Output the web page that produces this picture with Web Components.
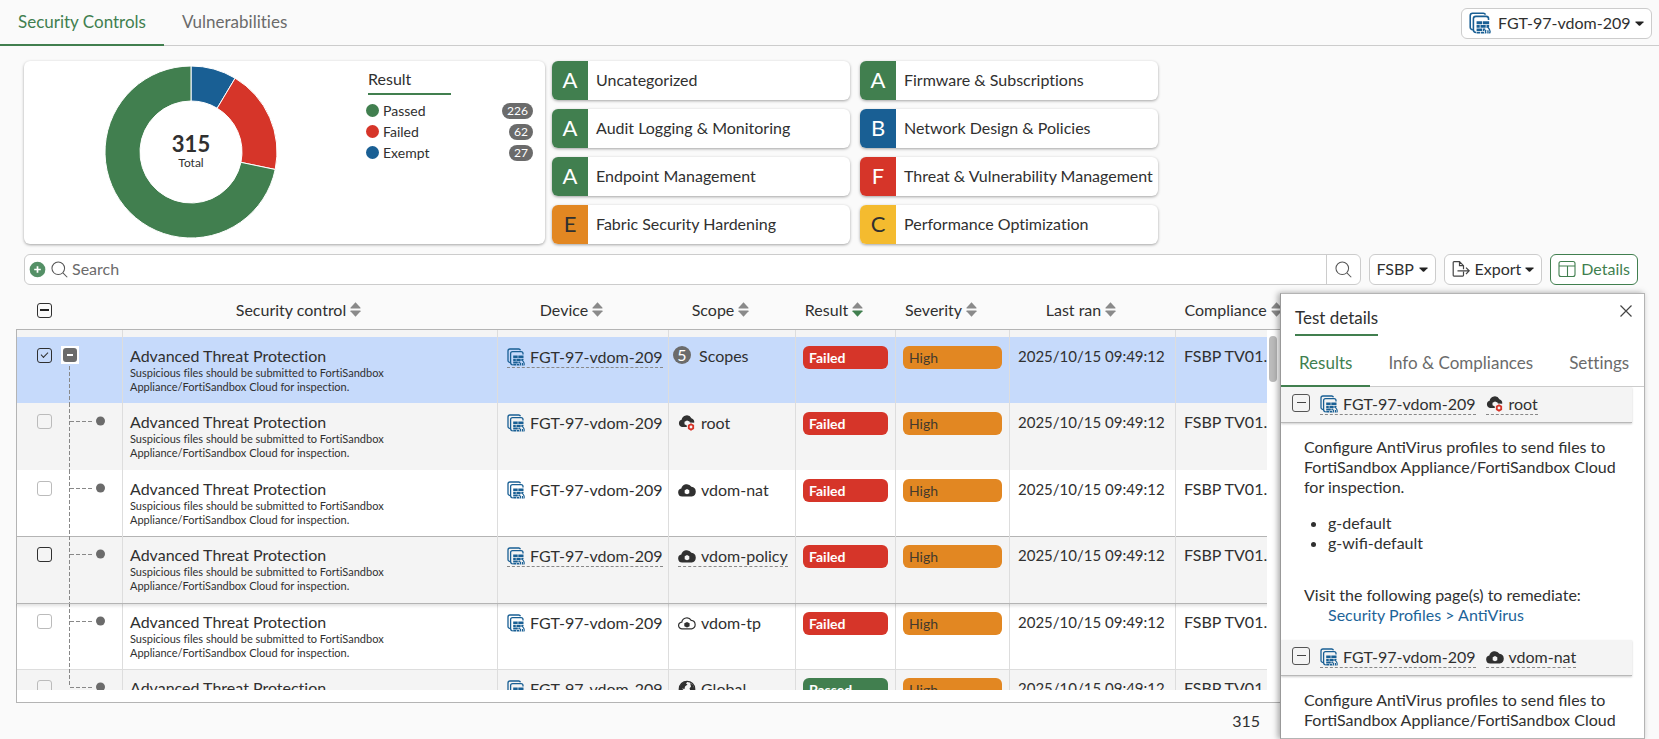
<!DOCTYPE html>
<html lang="en">
<head>
<meta charset="utf-8">
<title>Security Rating</title>
<meta name="viewport" content="width=device-width, initial-scale=1">
<style>
  :root {
    --green: #417f4f;
    --red: #d63529;
    --blue: #195f94;
    --orange: #e28722;
    --yellow: #f4bb2f;
    --grey: #6b6b6b;
    --line: #ccc;
    --text: #303030;
  }
  html, body {
    height: 100%;
    margin: 0;
  }
  body {
    background: #fafafa;
    color: var(--text);
    font: 16px/20px Lato, "Liberation Sans", sans-serif;
    font-variant-ligatures: none;
    overflow: hidden;
  }
</style>
</head>
<body>
<rating-page></rating-page>

<script>
const ICONS = {
  device: `<svg viewBox="0 0 18 18" fill="none">
    <path d="M3.200 14.500H3A2 2 0 0 1 1 12.500V3A2 2 0 0 1 3 1h8.500A2 2 0 0 1 13.500 2.200" stroke="#195f94" stroke-width="1.300"/>
    <path d="M5.800 16.800a2.200 2.200 0 0 1-2.200-2.200V5.600a2 2 0 0 1 2-2H14a2 2 0 0 1 2 2v1" stroke="#195f94" stroke-width="1.300"/>
    <path d="M6.200 7.600h4.500v2.500H6.200zM11.300 7.600h5.200v2.500h-5.200zM6.200 10.700h2.600v2.200H6.200zM9.400 10.700h4.300v2.200H9.400zM14.300 10.700h2.200v1.300l-2.200 1zM6.200 13.500h4.600v2.100H6.200zM11.400 13.500h2l-.9 2.100h-1.100zM6.200 16.100h2.900v1.500H6.200zM9.700 16.100h2.500l.5 1.500h-3z" fill="#195f94"/>
    <path d="M15.200 12.200c1 1.300 2.400 2.400 2 4.300l-.5 1M13.800 14.600c-.4 1-.6 1.900.2 2.900M15.500 15v2.500" stroke="#195f94" stroke-width="1.100"/>
  </svg>`,
  cloud: `<svg viewBox="0 0 18 18"><path fill="#303030" fill-rule="evenodd" d="M4.200 15.500A4 4 0 0 1 3.300 7.600 5.500 5.500 0 0 1 13.400 5.800 4.900 4.900 0 0 1 13.700 15.500zM6.700 9.200v3L9 13.300l2.300-1.100v-3L9 8.100z"/></svg>`,
  cloudOutline: `<svg viewBox="0 0 18 18" fill="none"><path stroke="#303030" stroke-width="1.200" d="M4.200 14.900A3.400 3.400 0 0 1 3.800 8.100 5.100 5.100 0 0 1 13.200 6.400 4.300 4.300 0 0 1 13.700 14.900z"/><path fill="#303030" d="M6.300 9.200 9 8l2.600 1.200v3L9 13.400l-2.700-1.200z"/></svg>`,
  cloudRoot: `<svg viewBox="0 0 18 18"><path fill="#303030" fill-rule="evenodd" d="M4 13A3.700 3.700 0 0 1 3.600 5.800 5.200 5.200 0 0 1 13.400 4.200 4.200 4.200 0 0 1 16.200 8.800l-4.400-.2-.3-1L9 6.500 6.500 7.700V10.300l2.300 1.200V13z"/>
    <circle cx="13" cy="13" r="2.300" fill="none" stroke="#d63529" stroke-width="1.700"/>
    <path stroke="#d63529" stroke-width="1.500" d="M13 9.500v1.500M13 15v1.500M10 11.300l1.300.7M14.700 14l1.300.7M10 14.700l1.300-.7M14.700 12l1.300-.7"/></svg>`,
  globe: `<svg viewBox="0 0 18 18"><circle cx="9" cy="9" r="7.700" fill="none" stroke="#303030" stroke-width="1.300"/><path fill="#303030" d="M2 6.500C3.500 3 6 1.500 9.500 1.600L8 3.500l1.500 1L7 6.500 6.500 9 4 8.500l3 3-1.500 3.500C2.500 13 1.500 10 2 6.500zM12 3l3 2 1.500 4-1.500 3.500L12.500 11l-1-2.500 1.500-2z"/></svg>`,
  search: `<svg viewBox="0 0 18 18" fill="none" stroke="#555" stroke-width="1.100"><circle cx="7.700" cy="7.700" r="6.700"/><path d="m12.600 12.600 4.600 4.600"/></svg>`,
  add: `<svg viewBox="0 0 18 18"><circle cx="9" cy="9" r="8.300" fill="#549066"/><path d="M9 5.500v7M5.500 9h7" stroke="#fff" stroke-width="1.800"/></svg>`,
  export: `<svg viewBox="0 0 18 18" fill="none" stroke="#444" stroke-width="1.200"><path d="M11.500 11.800v3.500a.8.800 0 0 1-.8.800H2a.8.800 0 0 1-.8-.8V2.500a.8.800 0 0 1 .8-.8h5.500l4 4v3.500M7.500 1.700v4h4M5.500 10.800h11.500M14 7.600l3.200 3.200L14 14"/></svg>`,
  columns: `<svg viewBox="0 0 18 18" fill="none" stroke="#417f4f" stroke-width="1.100"><rect x="1" y="1.500" width="16" height="15" rx="2"/><path d="M1 6h16M9.500 6V16.500"/></svg>`,
  close: `<svg viewBox="0 0 18 18" fill="none" stroke="#444" stroke-width="1.200"><path d="m3.500 3.500 11 11M14.500 3.500l-11 11"/></svg>`,
  caret: `<svg viewBox="0 0 18 18"><path fill="#222" d="M1.500 5h15q1.500 0 .5 1.500l-6.500 6.500q-1.500 1.200-3 0L1 6.500Q0 5 1.500 5z"/></svg>`,
  sort: `<svg viewBox="0 0 12 16"><path fill="#8a8a8a" d="m6 0 5.500 6q.3.800-.5 1H1Q.2 6.800.5 6z"/><path class="down" d="m6 16 5.500-6q.3-.8-.5-1H1Q.2 9.200.5 10z"/></svg>`
};

class UiIcon extends HTMLElement {
  constructor() {
    super();
    this.attachShadow({mode: 'open'});
  }

  connectedCallback() {
    this.shadowRoot.innerHTML = `
      <style>
        :host {
          display: inline-block;
          flex: none;
          width: var(--icon-width, 18px);
          height: var(--icon-height, 18px);
        }
        svg {
          display: block;
          width: 100%;
          height: 100%;
        }
        .down {
          fill: var(--sort-down, #8a8a8a);
        }
      </style>
      ${ICONS[this.getAttribute('name')]}
    `;
  }
}

class TabBar extends HTMLElement {
  constructor() {
    super();
    this.attachShadow({mode: 'open'});
  }

  connectedCallback() {
    const tabs = this.getAttribute('tabs').split('|');

    this.shadowRoot.innerHTML = `
      <style>
        :host {
          display: flex;
          align-items: flex-end;
          border-bottom: 1px solid var(--line);
        }
        button {
          border: 0;
          border-bottom: 2px solid transparent;
          margin: 0 0 -1px;
          padding: 0 18px 12px;
          background: none;
          color: var(--grey);
          font: 17px/20px Lato, sans-serif;
          font-variant-ligatures: none;
          white-space: nowrap;
        }
        button[aria-selected=true] {
          color: var(--green);
          border-bottom-color: var(--green);
        }
        [role=tablist] {
          display: flex;
        }
      </style>
      <div role="tablist">
        ${tabs.map((tab, i) => `<button role="tab" aria-selected="${i === 0}">${tab}</button>`).join('')}
      </div>
      <slot></slot>
    `;
  }
}

class SelectBox extends HTMLElement {
  constructor() {
    super();
    this.attachShadow({mode: 'open'});
  }

  connectedCallback() {
    this.shadowRoot.innerHTML = `
      <style>
        :host {
          display: flex;
          align-items: center;
          box-sizing: border-box;
          height: 31px;
          padding: 0 7px 1px;
          background: #fff;
          border: 1px solid var(--line);
          border-radius: 6px;
        }
        select {
          appearance: none;
          border: 0;
          margin: 0;
          padding: 0;
          background: none;
          color: inherit;
          font: inherit;
        }
        ui-icon {
          --icon-width: 9px;
          --icon-height: 9px;
          margin-left: 4px;
        }
      </style>
      <slot></slot>
      <select aria-label="${this.getAttribute('label')}"><option>${this.getAttribute('value')}</option></select>
      <ui-icon name="caret"></ui-icon>
    `;
  }
}

class ResultDonut extends HTMLElement {
  constructor() {
    super();
    this.attachShadow({mode: 'open'});
    this.results = [
      {label: 'Passed', count: 226, color: 'var(--green)'},
      {label: 'Failed', count: 62, color: 'var(--red)'},
      {label: 'Exempt', count: 27, color: 'var(--blue)'}
    ];
  }

  connectedCallback() {
    const total = this.results.reduce((sum, r) => sum + r.count, 0);

    this.shadowRoot.innerHTML = `
      <style>
        :host {
          display: flex;
          box-sizing: border-box;
          flex: 0 1 521px;
          padding: 5px 12px 5px 0;
          background: #fff;
          border-radius: 6px;
          box-shadow: 0 1px 3px rgba(0, 0, 0, .35);
        }
        .chart {
          flex: 1;
          display: flex;
          justify-content: center;
          padding-right: 8px;
        }
        svg {
          display: block;
          width: 172px;
          height: 172px;
        }
        text {
          text-anchor: middle;
          fill: var(--text);
        }
        .total {
          font-size: 22px;
          font-weight: 700;
        }
        .caption {
          font-size: 12px;
        }
        .legend {
          flex: 0 0 167px;
          padding-top: 3px;
        }
        h2 {
          width: 83px;
          margin: 0 0 5px 2px;
          padding-bottom: 4px;
          border-bottom: 2px solid var(--green);
          font-size: 16px;
          line-height: 20px;
          font-weight: 400;
        }
        ul {
          margin: 0;
          padding: 0;
          list-style: none;
        }
        li {
          display: flex;
          align-items: center;
          gap: 4px;
          height: 21px;
          font-size: 14px;
        }
        .dot {
          width: 13px;
          height: 13px;
          border-radius: 50%;
        }
        .count {
          margin-left: auto;
          padding: 0 5px;
          border-radius: 8px;
          background: var(--grey);
          color: #fff;
          font-size: 12px;
          line-height: 16px;
        }
      </style>
      <div class="chart">
        <svg viewBox="0 0 172 172" role="img" aria-label="${total} total">
          ${this.slices(total)}
          <text class="total" x="86" y="86">${total}</text>
          <text class="caption" x="86" y="101">Total</text>
        </svg>
      </div>
      <div class="legend">
        <h2>Result</h2>
        <ul>
          ${this.results.map(r => `
            <li><span class="dot" style="background: ${r.color}"></span>${r.label}<span class="count">${r.count}</span></li>
          `).join('')}
        </ul>
      </div>
    `;
  }

  // slices run clockwise from the top, last result first
  slices(total) {
    const point = (angle, r) => `${(86 + r * Math.sin(angle)).toFixed(2)} ${(86 - r * Math.cos(angle)).toFixed(2)}`;
    let start = 0;

    return [...this.results].reverse().map(({count, color}) => {
      const end = start + count / total * Math.PI * 2;
      const large = end - start > Math.PI ? 1 : 0;
      const d = `M${point(start, 86)}A86 86 0 ${large} 1 ${point(end, 86)}L${point(end, 51)}A51 51 0 ${large} 0 ${point(start, 51)}Z`;
      start = end;
      return `<path d="${d}" fill="${color}" stroke="#fff"/>`;
    }).join('');
  }
}

class GradeTile extends HTMLElement {
  constructor() {
    super();
    this.attachShadow({mode: 'open'});
  }

  connectedCallback() {
    const grade = this.getAttribute('grade');
    const colors = {
      A: ['var(--green)', '#fff'],
      B: ['var(--blue)', '#fff'],
      C: ['var(--yellow)', '#303030'],
      E: ['var(--orange)', '#303030'],
      F: ['var(--red)', '#fff']
    };
    const [back, fore] = colors[grade];

    this.shadowRoot.innerHTML = `
      <style>
        :host {
          display: flex;
          height: 39px;
          overflow: hidden;
          background: #fff;
          border-radius: 6px;
          box-shadow: 0 1px 3px rgba(0, 0, 0, .35);
          line-height: 38px;
          white-space: nowrap;
        }
        .grade {
          width: 36px;
          margin-right: 8px;
          background: ${back};
          color: ${fore};
          font-size: 22px;
          text-align: center;
        }
      </style>
      <span class="grade">${grade}</span>
      <slot></slot>
    `;
  }
}

class SearchBar extends HTMLElement {
  constructor() {
    super();
    this.attachShadow({mode: 'open'});
    this.shadowRoot.innerHTML = `
      <style>
        :host {
          display: flex;
          align-items: center;
          flex: 1;
          box-sizing: border-box;
          height: 31px;
          padding-left: 4px;
          background: #fff;
          border: 1px solid var(--line);
          border-radius: 6px;
        }
        button {
          display: flex;
          border: 0;
          padding: 0;
          background: none;
        }
        input {
          flex: 1;
          border: 0;
          padding: 0 4px 2px;
          background: none;
          font: inherit;
        }
        input::placeholder {
          color: var(--grey);
        }
        ui-icon {
          --icon-width: 17px;
          --icon-height: 17px;
        }
        .add {
          margin-right: 5px;
        }
        .go {
          height: 100%;
          align-items: center;
          padding: 0 8px;
          border-left: 1px solid var(--line);
        }
      </style>
      <button class="add" aria-label="Add filter"><ui-icon name="add"></ui-icon></button>
      <ui-icon name="search"></ui-icon>
      <input type="text" placeholder="Search" aria-label="Search">
      <button class="go" aria-label="Search"><ui-icon name="search"></ui-icon></button>
    `;
  }
}

// icon and name of a device or scope; "underline" draws it as a tooltip target
class ObjectLabel extends HTMLElement {
  constructor() {
    super();
    this.attachShadow({mode: 'open'});
  }

  connectedCallback() {
    this.shadowRoot.innerHTML = `
      <style>
        :host {
          display: inline-flex;
          align-items: center;
          gap: 5px;
          white-space: nowrap;
          border-bottom: 1px dashed transparent;
        }
        :host([underline]) {
          border-bottom-color: #888;
        }
      </style>
      <ui-icon name="${this.getAttribute('icon')}"></ui-icon>
      <slot></slot>
    `;
  }
}

class StatusPill extends HTMLElement {
  constructor() {
    super();
    this.attachShadow({mode: 'open'});
    this.shadowRoot.innerHTML = `
      <style>
        :host {
          display: block;
          padding: 0 6px;
          border-radius: 6px;
          color: #fff;
          font-size: 14px;
          line-height: 23px;
          font-weight: 700;
          background: var(--red);
        }
        :host([kind=passed]) {
          background: var(--green);
        }
        :host([kind=high]) {
          background: var(--orange);
          color: #443a2d;
          font-weight: 400;
        }
      </style>
      <slot></slot>
    `;
  }
}

class ControlsTable extends HTMLElement {
  constructor() {
    super();
    this.attachShadow({mode: 'open'});
    this.columns = ['Security control', 'Device', 'Scope', 'Result', 'Severity', 'Last ran', 'Compliance'];
    this.rows = [
      {scopes: 5, result: 'Failed', state: 'selected'},
      {scope: 'root', icon: 'cloudRoot', result: 'Failed'},
      {scope: 'vdom-nat', icon: 'cloud', result: 'Failed'},
      {scope: 'vdom-policy', icon: 'cloud', result: 'Failed', state: 'hovered'},
      {scope: 'vdom-tp', icon: 'cloudOutline', result: 'Failed'},
      {scope: 'Global', icon: 'globe', result: 'Passed', state: 'last'}
    ];
  }

  connectedCallback() {
    this.shadowRoot.innerHTML = `
      <style>
        :host {
          display: flex;
          flex-direction: column;
          flex: 1;
          min-width: 0;
        }
        .pane {
          flex: 1;
          min-height: 0;
          position: relative;
          overflow: hidden;
        }
        table {
          width: calc(100% + 33px);
          table-layout: fixed;
          border-collapse: separate;
          border-spacing: 0;
        }
        th {
          box-sizing: border-box;
          height: 45px;
          padding: 6px 22px 0 0;
          border-bottom: 1px solid #b4b4b4;
          font-weight: 400;
        }
        th:first-child {
          text-align: left;
          padding-left: 21px;
        }
        th button {
          display: inline-flex;
          align-items: center;
          gap: 4px;
          border: 0;
          padding: 0;
          background: none;
          color: inherit;
          font: inherit;
          font-variant-ligatures: none;
        }
        th ui-icon {
          --icon-width: 11px;
          --icon-height: 15px;
          margin-bottom: 2px;
        }
        th.sorted ui-icon {
          --sort-down: var(--green);
        }
        td {
          height: 66px;
          padding: 9px 7px 0;
          box-sizing: border-box;
          border-left: 1px solid #ddd;
          vertical-align: top;
          white-space: nowrap;
        }
        td:first-child {
          padding: 0 0 0 20px;
          border-left-color: #b4b4b4;
        }
        td:nth-child(3), td:nth-child(4) {
          padding: 10px 0 0 9px;
        }
        td:nth-child(7), td:nth-child(8) {
          padding-left: 8px;
        }
        td:nth-child(7) {
          font-size: 15px;
        }
        tbody tr {
          background: #fff;
        }
        tbody tr:nth-child(odd) {
          background: #f4f4f4;
        }
        tbody tr:nth-child(odd) td {
          height: 67px;
        }
        tbody tr.selected {
          background: #c6dafb;
        }
        tbody tr.cut td {
          height: 7px;
          padding: 0;
        }
        tr.hovered {
          position: relative;
          box-shadow: 0 1px 0 #b4b4b4, 0 3px 3px rgba(0, 0, 0, .12), inset 0 1px 0 #b4b4b4;
        }
        tr.last {
          box-shadow: inset 0 1px 0 #ddd;
        }
        input {
          appearance: none;
          display: grid;
          place-items: center;
          width: 15px;
          height: 15px;
          margin: 0;
          border: 1px solid #bbb;
          border-radius: 3px;
        }
        input.dark {
          border-color: #303030;
        }
        input:indeterminate::before {
          content: "";
          width: 9px;
          height: 2px;
          background: #222;
        }
        input:checked::before {
          content: "";
          width: 6px;
          height: 3px;
          margin-bottom: 3px;
          border: solid #303030;
          border-width: 0 0 1px 1px;
          transform: rotate(-45deg);
        }
        .lead {
          display: flex;
          gap: 9px;
        }
        .lead input {
          margin-top: 11px;
        }
        .tree {
          display: grid;
          justify-items: start;
        }
        .tree > * {
          grid-area: 1 / 1;
        }
        .tree svg {
          display: block;
          overflow: visible;
        }
        .toggle {
          width: 18px;
          height: 18px;
          margin-top: 9px;
          border: 2px solid #fff;
          padding: 0;
          background: #fff;
        }
        .toggle::before {
          content: "";
          display: block;
          width: 6px;
          height: 2px;
          border: solid var(--grey);
          border-width: 6px 4px;
          border-radius: 3px;
          background: #fff;
        }
        strong {
          display: block;
          font-weight: 400;
        }
        small {
          display: block;
          font-size: 11px;
          line-height: 14px;
        }
        .scopes {
          display: flex;
          gap: 8px;
          margin: -1px 0 0 -5px;
        }
        .scopes b {
          width: 18px;
          height: 18px;
          border-radius: 50%;
          background: var(--grey);
          color: #fff;
          font-size: 16px;
          line-height: 18px;
          font-weight: 400;
          text-align: center;
        }
        .track {
          position: absolute;
          top: 45px;
          right: 0;
          bottom: 0;
          width: 13px;
          background: #fff;
        }
        .thumb {
          width: 8px;
          height: 46px;
          margin: 6px 0 0 2px;
          border-radius: 4px;
          background: #bbb;
        }
        .rest {
          height: 12px;
          background: #fff;
          border: solid #b4b4b4;
          border-width: 0 0 1px 1px;
        }
        footer {
          padding: 8px 20px 8px 0;
          text-align: right;
        }
      </style>
      <div class="pane">
        <table>
          <colgroup>
            <col style="width: 106px"><col><col style="width: 171px"><col style="width: 127px">
            <col style="width: 100px"><col style="width: 114px"><col style="width: 166px"><col style="width: 138px">
          </colgroup>
          <thead>
            <tr>
              <th><input type="checkbox" class="dark all" aria-label="Select all rows"></th>
              ${this.columns.map(name => `
                <th scope="col" class="${name === 'Result' ? 'sorted' : ''}"><button>${name}<ui-icon name="sort"></ui-icon></button></th>
              `).join('')}
            </tr>
          </thead>
          <tbody>
            <tr class="cut">${'<td></td>'.repeat(8)}</tr>
            ${this.rows.map(row => this.renderRow(row)).join('')}
          </tbody>
        </table>
        <div class="track"><div class="thumb"></div></div>
      </div>
      <div class="rest"></div>
      <footer>315</footer>
    `;
    this.shadowRoot.querySelector('.all').indeterminate = true;
  }

  renderRow({scopes, scope, icon, result, state = ''}) {
    const active = state === 'selected' || state === 'hovered';
    const underline = active ? 'underline' : '';
    const lineStart = scopes ? 29 : 0;
    const lineEnd = state === 'last' ? 18 : 67;

    return `
      <tr class="${state}">
        <td>
          <div class="lead">
            <input type="checkbox" aria-label="Select row" class="${active ? 'dark' : ''}" ${scopes ? 'checked' : ''}>
            <div class="tree">
              <svg width="46" height="66" fill="none" stroke="#888" stroke-dasharray="4 2">
                <path d="M8.500 ${lineStart}V${lineEnd}"/>
                ${scopes ? '' : '<path d="M9 18.500h24"/><circle cx="39.500" cy="18" r="4.500" fill="#6b6b6b" stroke="none"/>'}
              </svg>
              ${scopes ? '<button class="toggle" aria-label="Collapse"></button>' : ''}
            </div>
          </div>
        </td>
        <td>
          <strong>Advanced Threat Protection</strong>
          <small>Suspicious files should be submitted to FortiSandbox<br>Appliance/FortiSandbox Cloud for inspection.</small>
        </td>
        <td><object-label icon="device" ${underline}>FGT-97-vdom-209</object-label></td>
        <td>${scopes
          ? `<div class="scopes"><b>${scopes}</b>Scopes</div>`
          : `<object-label icon="${icon}" ${underline}>${scope}</object-label>`}</td>
        <td><status-pill kind="${result.toLowerCase()}">${result}</status-pill></td>
        <td><status-pill kind="high">High</status-pill></td>
        <td>2025/10/15 09:49:12</td>
        <td>FSBP TV01.1</td>
      </tr>
    `;
  }
}

class ResultSection extends HTMLElement {
  constructor() {
    super();
    this.attachShadow({mode: 'open'});
  }

  connectedCallback() {
    this.shadowRoot.innerHTML = `
      <style>
        :host {
          display: block;
        }
        header {
          display: flex;
          align-items: center;
          height: 35px;
          padding-left: 11px;
          background: #f4f4f4;
          border-bottom: 1px solid #b8b8b8;
          box-shadow: 0 1px 2px rgba(0, 0, 0, .2);
        }
        button {
          display: grid;
          place-items: center;
          width: 18px;
          height: 18px;
          margin-bottom: 4px;
          padding: 0;
          border: 1px solid #555;
          border-radius: 3px;
          background: none;
        }
        button::before {
          content: "";
          width: 9px;
          height: 1px;
          background: #444;
        }
        object-label {
          margin-left: 10px;
        }
        .body {
          padding: 14px 8px 15px 23px;
          font-variant-ligatures: normal;
        }
      </style>
      <header>
        <button aria-label="Collapse"></button>
        <object-label icon="device" underline>FGT-97-vdom-209</object-label>
        <object-label icon="${this.getAttribute('icon')}" underline>${this.getAttribute('scope')}</object-label>
      </header>
      <div class="body"><slot></slot></div>
    `;
  }
}

class DetailsPanel extends HTMLElement {
  constructor() {
    super();
    this.attachShadow({mode: 'open'});
    this.shadowRoot.innerHTML = `
      <style>
        :host {
          display: flex;
          flex-direction: column;
          flex: 0 0 365px;
          min-width: 0;
          box-sizing: border-box;
          margin-top: 8px;
          position: relative;
          background: #fff;
          border: 1px solid #b4b4b4;
          border-left-color: #999;
          box-shadow: -2px 0 6px rgba(0, 0, 0, .35);
        }
        .title {
          display: flex;
          justify-content: space-between;
          align-items: flex-start;
          padding: 8px 9px 0 14px;
        }
        h2 {
          margin: 6px 0 0;
          padding-bottom: 6px;
          border-bottom: 2px solid var(--green);
          font-size: 17px;
          line-height: 20px;
          font-weight: 400;
        }
        .title button {
          display: flex;
          border: 0;
          padding: 0;
          background: none;
        }
        tab-bar {
          padding-top: 17px;
        }
        .results {
          flex: 1;
          min-height: 0;
          overflow: hidden;
          margin-bottom: 4px;
          padding-right: 12px;
        }
        p {
          margin: 0;
        }
        ul {
          margin: 16px 0 32px;
          padding-left: 24px;
        }
        p a {
          display: block;
          margin-left: 24px;
        }
        a {
          color: #1d6499;
          text-decoration: none;
        }
      </style>
      <div class="title">
        <h2>Test details</h2>
        <button aria-label="Close"><ui-icon name="close"></ui-icon></button>
      </div>
      <tab-bar tabs="Results|Info &amp;amp; Compliances|Settings"></tab-bar>
      <div class="results">
        <result-section scope="root" icon="cloudRoot">
          <p>Configure AntiVirus profiles to send files to FortiSandbox Appliance/FortiSandbox Cloud for inspection.</p>
          <ul><li>g-default</li><li>g-wifi-default</li></ul>
          <p>Visit the following page(s) to remediate:<a href="#antivirus">Security Profiles &gt; AntiVirus</a></p>
        </result-section>
        <result-section scope="vdom-nat" icon="cloud">
          <p>Configure AntiVirus profiles to send files to FortiSandbox Appliance/FortiSandbox Cloud</p>
        </result-section>
      </div>
    `;
  }
}

class RatingPage extends HTMLElement {
  constructor() {
    super();
    this.attachShadow({mode: 'open'});
    this.shadowRoot.innerHTML = `
      <style>
        :host {
          display: flex;
          flex-direction: column;
          height: 100vh;
        }
        .top {
          height: 45px;
        }
        .device {
          margin: 0 7px 6px auto;
        }
        .device ui-icon {
          --icon-width: 22px;
          --icon-height: 22px;
          margin-right: 7px;
        }
        .summary {
          display: flex;
          gap: 7px;
          padding: 15px 24px 10px;
        }
        .grades {
          display: grid;
          grid-template-columns: 298px 298px;
          gap: 9px 10px;
        }
        .toolbar {
          display: flex;
          gap: 8px;
          padding: 0 21px 0 24px;
        }
        .button {
          display: flex;
          align-items: center;
          box-sizing: border-box;
          height: 31px;
          padding: 0 7px 1px;
          border: 1px solid var(--line);
          border-radius: 6px;
          background: #fff;
          color: inherit;
          font: inherit;
        }
        .button ui-icon {
          margin-right: 5px;
        }
        .button ui-icon[name=caret] {
          --icon-width: 9px;
          --icon-height: 9px;
          margin: 0 0 0 4px;
        }
        .on {
          color: var(--green);
          border-color: var(--green);
        }
        .split {
          display: flex;
          flex: 1;
          min-height: 0;
          padding: 0 14px 0 16px;
        }
      </style>
      <tab-bar class="top" tabs="Security Controls|Vulnerabilities">
        <select-box class="device" label="Device" value="FGT-97-vdom-209"><ui-icon name="device"></ui-icon></select-box>
      </tab-bar>
      <div class="summary">
        <result-donut></result-donut>
        <div class="grades">
          <grade-tile grade="A">Uncategorized</grade-tile>
          <grade-tile grade="A">Firmware &amp; Subscriptions</grade-tile>
          <grade-tile grade="A">Audit Logging &amp; Monitoring</grade-tile>
          <grade-tile grade="B">Network Design &amp; Policies</grade-tile>
          <grade-tile grade="A">Endpoint Management</grade-tile>
          <grade-tile grade="F">Threat &amp; Vulnerability Management</grade-tile>
          <grade-tile grade="E">Fabric Security Hardening</grade-tile>
          <grade-tile grade="C">Performance Optimization</grade-tile>
        </div>
      </div>
      <div class="toolbar">
        <search-bar></search-bar>
        <select-box label="Standard" value="FSBP"></select-box>
        <button class="button"><ui-icon name="export"></ui-icon>Export<ui-icon name="caret"></ui-icon></button>
        <button class="button on"><ui-icon name="columns"></ui-icon>Details</button>
      </div>
      <div class="split">
        <controls-table></controls-table>
        <details-panel></details-panel>
      </div>
    `;
  }
}

customElements.define('ui-icon', UiIcon);
customElements.define('tab-bar', TabBar);
customElements.define('select-box', SelectBox);
customElements.define('result-donut', ResultDonut);
customElements.define('grade-tile', GradeTile);
customElements.define('search-bar', SearchBar);
customElements.define('object-label', ObjectLabel);
customElements.define('status-pill', StatusPill);
customElements.define('controls-table', ControlsTable);
customElements.define('result-section', ResultSection);
customElements.define('details-panel', DetailsPanel);
customElements.define('rating-page', RatingPage);
</script>
</body>
</html>
